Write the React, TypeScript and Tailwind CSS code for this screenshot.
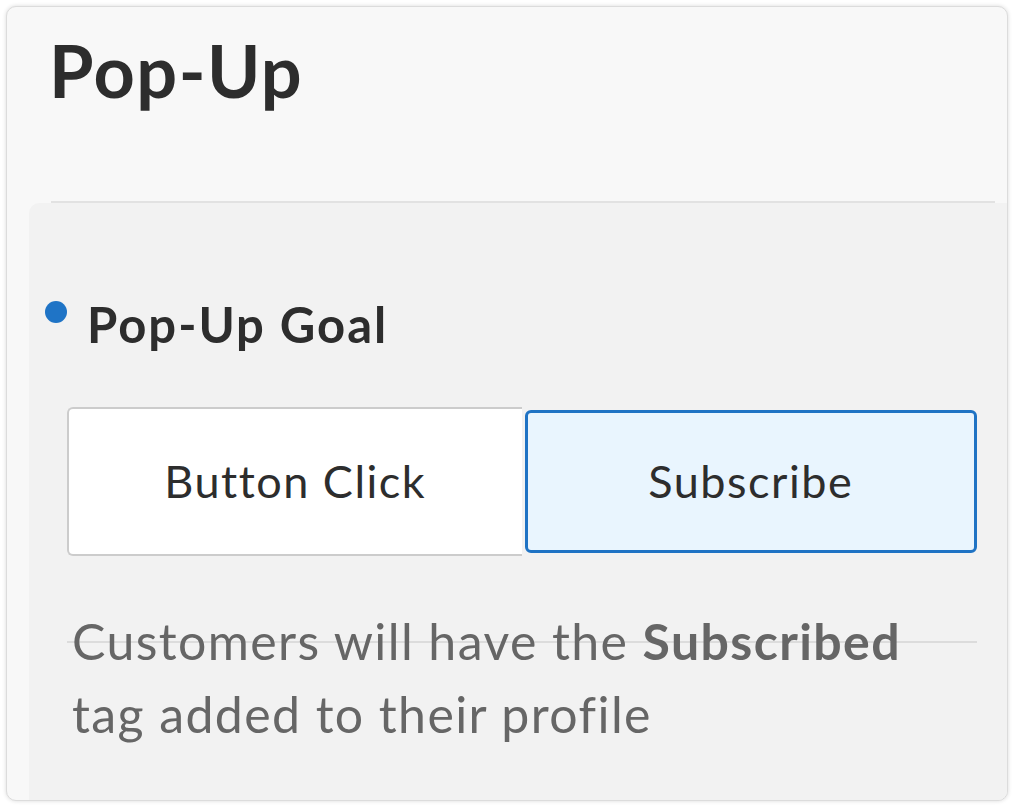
import React from "react";

export default function App() {
  return (
    <div className="w-[1015px] h-[808px] bg-white p-[6px] pr-[7px]" style={{ fontFamily: "Lato, 'Open Sans', sans-serif" }}>
      <div className="flex h-[795px] flex-col overflow-hidden rounded-[10px] border border-[#dcdcdc] bg-[#f8f8f8] shadow-[0_0_4px_rgba(0,0,0,0.15)]">
        {/* Header */}
        <div className="h-[194px] pl-[42px] pt-[20px]">
          <h1 className="text-[72px] font-bold leading-[1.2] tracking-[1.5px] text-[#2d2d2d]">Pop-Up</h1>
        </div>
        <div className="ml-[44px] mr-[12px] h-[2px] bg-[#e2e2e2]" />

        {/* Goal panel */}
        <div className="ml-[22px] flex-1 rounded-tl-[10px] bg-[#f2f2f2] pl-[38px] pr-[30px] pt-[97px]">
          <div className="relative flex items-center pl-[20px]">
            <span className="absolute left-[-22px] top-[1px] h-[22px] w-[22px] rounded-full bg-[#1f74c6]" />
            <h2 className="text-[49px] font-bold leading-none tracking-[2px] text-[#2d2d2d]">Pop-Up Goal</h2>
          </div>

          <div className="mt-[58px] flex h-[149px]">
            <button className="flex flex-1 items-center justify-center rounded-l-[6px] border-2 border-r-0 border-[#cccccc] bg-white text-[45px] tracking-[1.5px] text-[#2d2d2d]">
              Button Click
            </button>
            <div className="flex flex-1 py-[3px] pl-[3px]">
              <button className="flex flex-1 items-center justify-center rounded-[6px] border-[3px] border-[#1f73c4] bg-[#e9f5fe] text-[45px] tracking-[1.5px] text-[#2d2d2d]">
                Subscribe
              </button>
            </div>
          </div>

          <div className="relative mt-[49px]">
            <div className="absolute left-0 right-0 top-[36px] h-[2px] bg-[#dcdcdc]" />
            <p className="relative pl-[5px] text-[50px] leading-[73px] tracking-[1.4px] text-[#666666]">
              Customers will have the <span className="font-bold">Subscribed</span>
              <br />
              tag added to their profile
            </p>
          </div>
        </div>
      </div>
    </div>
  );
}
